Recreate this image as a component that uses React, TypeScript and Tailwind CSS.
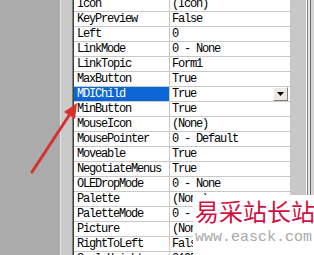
import React from "react";

type Prop = { name: string; value: string };

const props: Prop[] = [
	{ name: "Icon", value: "(Icon)" },
	{ name: "KeyPreview", value: "False" },
	{ name: "Left", value: "0" },
	{ name: "LinkMode", value: "0 - None" },
	{ name: "LinkTopic", value: "Form1" },
	{ name: "MaxButton", value: "True" },
	{ name: "MDIChild", value: "True" },
	{ name: "MinButton", value: "True" },
	{ name: "MouseIcon", value: "(None)" },
	{ name: "MousePointer", value: "0 - Default" },
	{ name: "Moveable", value: "True" },
	{ name: "NegotiateMenus", value: "True" },
	{ name: "OLEDropMode", value: "0 - None" },
	{ name: "Palette", value: "(None)" },
	{ name: "PaletteMode", value: "0 - Halftone" },
	{ name: "Picture", value: "(None)" },
	{ name: "RightToLeft", value: "False" },
	{ name: "ScaleHeight", value: "3195" },
];

const SELECTED = "MDIChild";

const PropRow: React.FC<{ prop: Prop }> = ({ prop }) => {
	const selected = prop.name === SELECTED;
	return (
		<div className="flex h-[15px] shrink-0 border-b border-[#c8c8c8]">
			<div
				className={`w-[96px] shrink-0 overflow-hidden whitespace-nowrap border-r border-[#c8c8c8] pl-[3px] leading-[14px] ${
					selected ? "bg-[#0c67d4] text-white" : "text-black"
				}`}
			>
				{prop.name}
			</div>
			<div className="flex flex-1 items-center overflow-hidden whitespace-nowrap pl-[2px] leading-[14px] text-black">
				<span className="flex-1">{prop.value}</span>
				{selected && (
					<div className="mr-[2px] flex h-[14px] w-[15px] items-center justify-center border border-t-white border-l-white border-r-[#808080] border-b-[#808080] bg-[#ece9e4]">
						<svg width="7" height="4" viewBox="0 0 7 4">
							<polygon points="0,0 7,0 3.5,4" fill="#000" />
						</svg>
					</div>
				)}
			</div>
		</div>
	);
};

export default function App() {
	return (
		<div
			className="relative flex h-[255px] w-[314px] overflow-hidden bg-white text-[12px] tracking-[-1.2px]"
			style={{ fontFamily: '"Liberation Mono", "DejaVu Sans Mono", monospace' }}
		>
			{/* left grey area and border */}
			<div className="w-[60px] shrink-0 bg-[#ababab]" />
			<div className="w-px shrink-0 bg-[#e6e6e6]" />
			<div className="w-[11px] shrink-0 bg-[#c9c9c9]" />
			<div className="w-px shrink-0 bg-[#808080]" />
			<div className="w-px shrink-0 bg-[#404040]" />

			{/* property grid */}
			<div className="-mt-[3px] flex w-[216px] shrink-0 flex-col">
				{props.map((p) => (
					<PropRow key={p.name} prop={p} />
				))}
			</div>

			{/* scrollbar strip */}
			<div className="w-[16px] shrink-0 bg-[#c8c8c8]" />
			<div className="w-px shrink-0 bg-white" />
			<div className="w-px shrink-0 bg-[#808080]" />
			<div className="w-[2px] shrink-0 bg-[#e8e8e8]" />
			<div className="w-px shrink-0 bg-[#6a6a6a]" />
			<div className="flex-1 bg-[#d4d4d4]" />

			{/* red arrow annotation */}
			<svg
				className="pointer-events-none absolute left-0 top-0"
				width="314"
				height="255"
				viewBox="0 0 314 255"
			>
				<line
					x1="32"
					y1="172"
					x2="70"
					y2="114"
					stroke="#d8302c"
					strokeWidth="3"
					strokeLinecap="round"
				/>
				<polygon points="77,103 64,112 75,119" fill="#d8302c" />
			</svg>

			{/* watermark */}
			<div className="absolute bottom-0 left-[193px] right-0 top-[195px] flex flex-col bg-white pl-[2px] tracking-normal">
				<div
					className="mt-[2px] whitespace-nowrap text-[24px] leading-[28px] text-[#d1103f]"
					style={{ fontFamily: '"Noto Sans CJK SC", sans-serif' }}
				>
					易采站长站
				</div>
				<div
					className="mt-[5px] whitespace-nowrap text-[15px] leading-[16px] text-[#a8a8a8]"
					style={{ fontFamily: '"Liberation Mono", monospace' }}
				>
					www.easck.com
				</div>
			</div>
		</div>
	);
}
